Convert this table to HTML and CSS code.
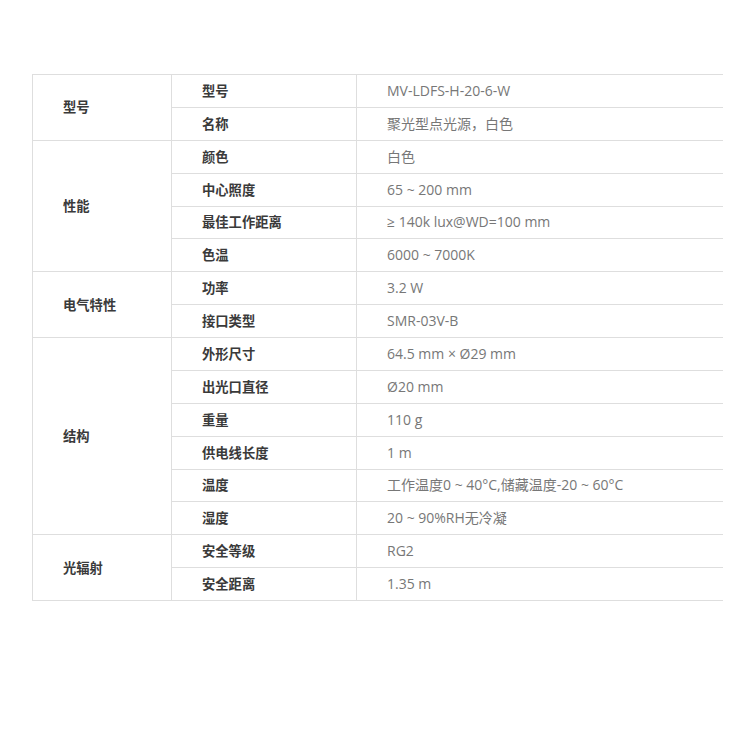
FILE: index.html
```html
<!DOCTYPE html>
<html lang="zh">
<head>
<meta charset="utf-8">
<link rel="stylesheet" href="styles.css">
</head>
<body>
<div class="page">
<table class="spec">
<colgroup><col class="c1"><col class="c2"><col class="c3"></colgroup>
<tbody>
<tr><td class="grp" rowspan="2">型号</td><td class="key">型号</td><td class="val">MV-LDFS-H-20-6-W</td></tr>
<tr><td class="key">名称</td><td class="val">聚光型点光源，白色</td></tr>
<tr><td class="grp" rowspan="4">性能</td><td class="key">颜色</td><td class="val">白色</td></tr>
<tr><td class="key">中心照度</td><td class="val">65 ~ 200 mm</td></tr>
<tr><td class="key">最佳工作距离</td><td class="val">≥ 140k lux@WD=100 mm</td></tr>
<tr><td class="key">色温</td><td class="val">6000 ~ 7000K</td></tr>
<tr><td class="grp" rowspan="2">电气特性</td><td class="key">功率</td><td class="val">3.2 W</td></tr>
<tr><td class="key">接口类型</td><td class="val">SMR-03V-B</td></tr>
<tr><td class="grp" rowspan="6">结构</td><td class="key">外形尺寸</td><td class="val">64.5 mm × Ø29 mm</td></tr>
<tr><td class="key">出光口直径</td><td class="val">Ø20 mm</td></tr>
<tr><td class="key">重量</td><td class="val">110 g</td></tr>
<tr><td class="key">供电线长度</td><td class="val">1 m</td></tr>
<tr><td class="key">温度</td><td class="val">工作温度0 ~ 40°C,储藏温度-20 ~ 60°C</td></tr>
<tr><td class="key">湿度</td><td class="val">20 ~ 90%RH无冷凝</td></tr>
<tr><td class="grp" rowspan="2">光辐射</td><td class="key">安全等级</td><td class="val">RG2</td></tr>
<tr><td class="key">安全距离</td><td class="val">1.35 m</td></tr>
</tbody>
</table>
</div>
</body>
</html>
```
FILE: styles.css
```css
html, body {
  margin: 0;
  padding: 0;
  background: #fff;
}
.page {
  padding: 74px 0 0 32px;
}
.spec {
  border-collapse: collapse;
  width: 690px;
  table-layout: fixed;
  font-family: "Noto Sans", "Noto Sans CJK SC", sans-serif;
  font-size: 13.3px;
}
.c1 { width: 139px; }
.c2 { width: 185px; }
.c3 { width: 366px; }
.spec td {
  height: 32.875px;
  padding: 0 0 0 30px;
  border: 1px solid #dedede;
  vertical-align: middle;
  box-sizing: border-box;
  line-height: 18px;
}
.spec td.val {
  border-right: none;
  color: #777;
  font-family: "Open Sans", "Noto Sans CJK SC", sans-serif;
  font-size: 14px;
}
.spec td.key,
.spec td.grp {
  color: #3a3a3a;
  font-weight: bold;
}
```
